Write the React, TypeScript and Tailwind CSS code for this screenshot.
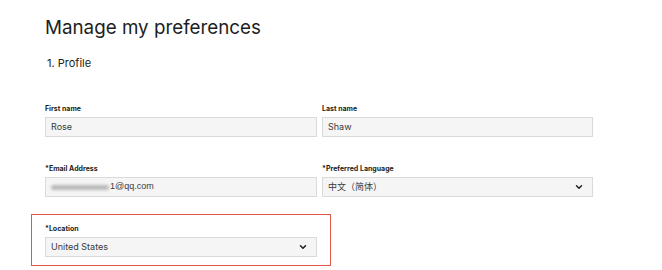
import { ChevronDown } from 'lucide-react'

function Label({ children }: { children: React.ReactNode }) {
  return <p className="mb-[4px] text-[7px] font-bold leading-[9px] text-[#1c1e21]">{children}</p>
}

function Field({ children, select }: { children: React.ReactNode; select?: boolean }) {
  return (
    <div className="flex h-[20px] items-center justify-between border border-[#dadada] bg-[#f5f5f5] pl-[5px] pr-[8px] text-[9px] text-[#3a3b3c]">
      <span className="flex items-center">{children}</span>
      {select && <ChevronDown className="h-[10px] w-[10px] text-[#1c1e21]" strokeWidth={3.5} />}
    </div>
  )
}

export default function App() {
  return (
    <div className="h-[270px] w-[662px] overflow-hidden bg-white font-['Inter',sans-serif]">
      <div className="pl-[45px] pt-[16px]">
        <h1 className="text-[18.8px] font-normal leading-[24px] text-[#1c1e21]">Manage my preferences</h1>
        <p className="mt-[17px] pl-[2px] text-[11px] leading-[12px] text-[#1c1e21]">1. Profile</p>

        <div className="mt-[35px] grid w-[548px] grid-cols-[272px_271px] gap-x-[5px]">
          <div>
            <Label>First name</Label>
            <Field>Rose</Field>
          </div>
          <div>
            <Label>Last name</Label>
            <Field>Shaw</Field>
          </div>
        </div>

        <div className="mt-[27px] grid w-[548px] grid-cols-[272px_271px] gap-x-[5px]">
          <div>
            <Label>*Email Address</Label>
            <Field>
              <span className="mr-[1px] inline-block h-[5px] w-[58px] rounded-sm bg-[#b8b8b8] blur-[1.5px]" />
              <span className="font-['Liberation_Sans',sans-serif]">1@qq.com</span>
            </Field>
          </div>
          <div>
            <Label>*Preferred Language</Label>
            <Field select>
              <span className="font-['Noto_Sans_CJK_SC',sans-serif]">中文（简体）</span>
            </Field>
          </div>
        </div>
      </div>

      <div className="ml-[31px] mt-[17px] w-[300px] border-[1.5px] border-[#e0574c] px-[13px] pb-[8px] pt-[9px]">
        <Label>*Location</Label>
        <Field select>United States</Field>
      </div>
    </div>
  )
}
